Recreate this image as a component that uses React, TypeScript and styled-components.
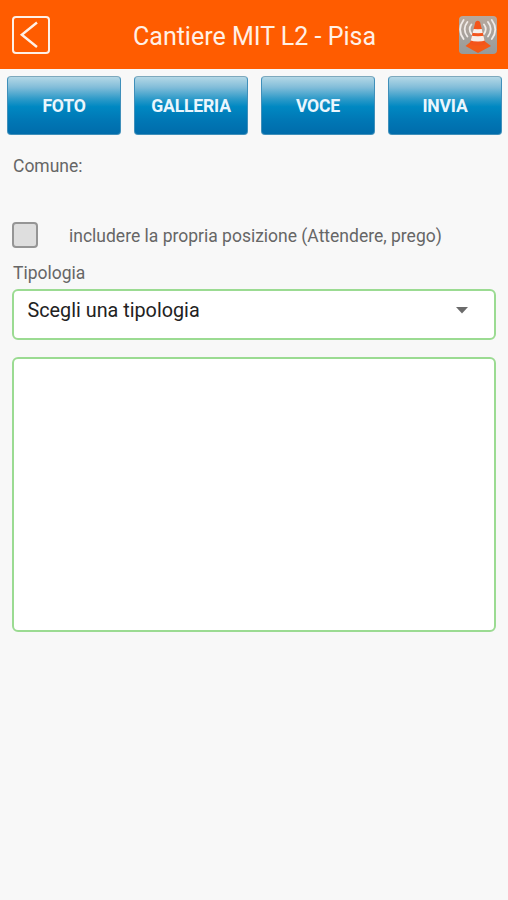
import React from "react";
import styled, { createGlobalStyle } from "styled-components";

const GlobalStyle = createGlobalStyle`
  * { box-sizing: border-box; }
  body { margin: 0; background: #f8f8f8; font-family: Roboto, "Liberation Sans", sans-serif; }
  button { font-family: inherit; }
`;

const Screen = styled.main`
  min-height: 900px;
  background: #f8f8f8;
`;

const Header = styled.header`
  height: 69px;
  padding: 0 11px 0 12px;
  display: grid;
  grid-template-columns: 38px 1fr 38px;
  align-items: center;
  background: #ff5c00;
`;

const Title = styled.h1`
  margin: 4px 0 0;
  text-align: center;
  white-space: nowrap;
  color: #fff0e6;
  font-size: 25px;
  font-weight: 400;
  line-height: 32px;
`;

const BackButton = styled.button`
  width: 38px;
  height: 38px;
  padding: 0;
  border: 2px solid #fff0e6;
  border-radius: 4px;
  background: none;
  display: flex;
  align-items: center;
  justify-content: center;
`;

const Logo = styled.svg`
  display: block;
  width: 38px;
  height: 38px;
`;

const Toolbar = styled.nav`
  padding: 7px 6px 0 7px;
  display: grid;
  grid-template-columns: repeat(4, 1fr);
  gap: 13px;
`;

const ActionButton = styled.button`
  height: 59px;
  padding: 0;
  border: 1px solid #3f8fba;
  border-top-color: #7ea9bd;
  border-radius: 4px;
  background: linear-gradient(#b4d8e6 0%, #82bdd9 18%, #2f9bc9 38%, #0088c2 52%, #0076b4 78%, #006cab 100%);
  color: #eaf6fd;
  font-size: 17.6px;
  font-weight: 700;
  letter-spacing: -0.2px;
  line-height: 20px;
`;

const Form = styled.form`
  padding: 20px 12px 0;
  display: flex;
  flex-direction: column;
  color: #666;
  font-size: 17.5px;
  line-height: 22px;
`;

const Label = styled.span`
  display: block;
  height: 22px;
  padding-left: 1px;
  white-space: nowrap;
`;

const CheckRow = styled.label`
  height: 26px;
  margin: 45px 0 14px;
  display: flex;
  align-items: center;
  gap: 31px;
  white-space: nowrap;
`;

const CheckText = styled.span`
  padding-top: 2px;
`;

const CheckBox = styled.input`
  appearance: none;
  width: 26px;
  height: 26px;
  margin: 0;
  border: 2px solid #959595;
  border-radius: 4px;
  background: #dedede;
`;

const Select = styled.div`
  height: 51px;
  margin-top: 5px;
  padding: 9px 26px 0 13.5px;
  display: flex;
  align-items: flex-start;
  justify-content: space-between;
  border: 2px solid #9bdb92;
  border-radius: 6px;
  background: #fff;
  color: #222;
  font-size: 19.8px;
`;

const Caret = styled.svg`
  display: block;
  width: 12px;
  height: 7px;
  margin-top: 7px;
`;

const Notes = styled.textarea`
  height: 275px;
  margin-top: 17px;
  border: 2px solid #9bdb92;
  border-radius: 6px;
  background: #fff;
  resize: none;
  outline: none;
`;

const actions = ["FOTO", "GALLERIA", "VOCE", "INVIA"];

function ConeLogo() {
  return (
    <Logo viewBox="0 0 38 38">
      <defs>
        <linearGradient id="tile" x2="0" y2="1">
          <stop stopColor="#b8a89c" />
          <stop offset="1" stopColor="#969b9b" />
        </linearGradient>
        <clipPath id="cone"><path d="M16.4 6q2.3-2.5 4.6 0L26.5 28q-7.8 3-15.6 0Z" /></clipPath>
      </defs>
      <rect width="38" height="38" rx="4" fill="url(#tile)" />
      <g fill="none" stroke="#f0ebe8" strokeWidth="1.8" strokeLinecap="round">
        <path d="M12.4 8.5q-3.5 4.5 0 9.5M8.4 6q-5.5 7 0 14.5M4.6 4q-7 9.5 0 19" />
        <path d="M25 8.5q3.5 4.5 0 9.5M29 6q5.5 7 0 14.5M32.8 4q7 9.5 0 19" />
      </g>
      <path d="M6.5 30 12 25.5h14l6 4.5-13 7Z" fill="#f45a17" />
      <g clipPath="url(#cone)">
        <path fill="#f4541b" d="M10 3h18v30H10z" />
        <path fill="#f5eeea" d="M10 12q9 2.5 18 0v4q-9 2.5-18 0zM10 19q9 2.5 18 0v5q-9 3-18 0z" />
      </g>
    </Logo>
  );
}

export default function App() {
  return (
    <>
      <GlobalStyle />
      <Screen>
        <Header>
          <BackButton aria-label="Indietro">
            <svg width="34" height="34" viewBox="0 0 34 34" fill="none">
              <path d="M23 4.5 7.8 16.7 23 29" stroke="#fff0e6" strokeWidth="2.4" />
            </svg>
          </BackButton>
          <Title>Cantiere MIT L2 - Pisa</Title>
          <ConeLogo />
        </Header>
        <Toolbar>
          {actions.map((action) => <ActionButton key={action}>{action}</ActionButton>)}
        </Toolbar>
        <Form>
          <Label>Comune:</Label>
          <CheckRow>
            <CheckBox type="checkbox" />
            <CheckText>includere la propria posizione (Attendere, prego)</CheckText>
          </CheckRow>
          <Label>Tipologia</Label>
          <Select role="combobox" aria-expanded="false">
            Scegli una tipologia
            <Caret viewBox="0 0 12 7"><path d="M0 0h12L6 6.5z" fill="#6b6b6b" /></Caret>
          </Select>
          <Notes aria-label="Descrizione" />
        </Form>
      </Screen>
    </>
  );
}
